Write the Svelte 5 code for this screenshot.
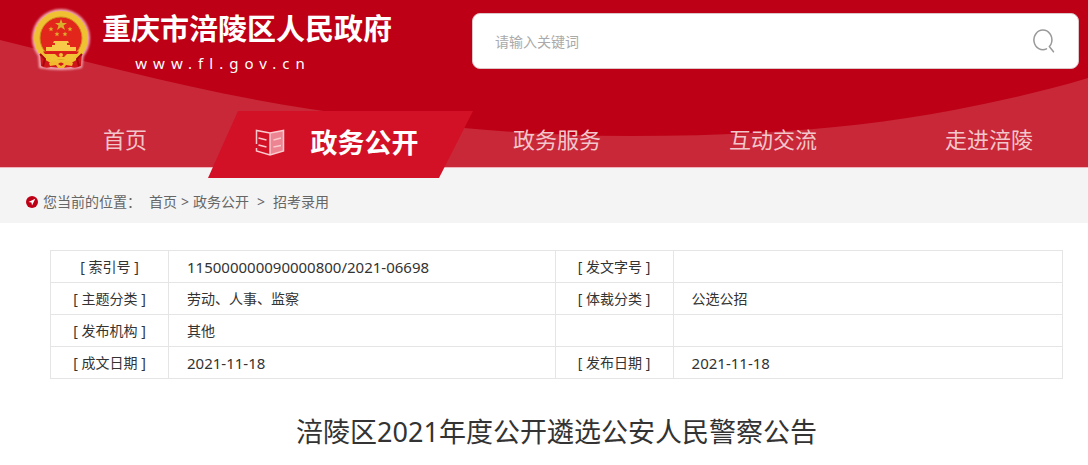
<script>
  const nav = ['首页', '政务公开', '政务服务', '互动交流', '走进涪陵'];
  const active = '政务公开';
  const rows = [
    ['[ 索引号 ]', '115000000090000800/2021-06698', '[ 发文字号 ]', ''],
    ['[ 主题分类 ]', '劳动、人事、监察', '[ 体裁分类 ]', '公选公招'],
    ['[ 发布机构 ]', '其他', '', ''],
    ['[ 成文日期 ]', '2021-11-18', '[ 发布日期 ]', '2021-11-18']
  ];
  const smallStars = [[20, 20], [39, 20], [26, 25], [34, 25]];
  let keyword = $state('');
</script>

<div class="page">
  <header>
    <svg class="wave" viewBox="0 0 1088 167" preserveAspectRatio="none" aria-hidden="true">
      <path d="M0 40C100 65 205 93 310 109C410 124 520 136 630 136C740 136 850 130 954 110C1000 101 1045 91 1088 78V167H0Z" fill="#c82838" />
    </svg>
    <div class="top">
      <a class="brand" href="#home">
        <svg class="emblem" viewBox="0 0 60 64" width="60" height="64" aria-hidden="true">
          <g class="halo">
            <circle cx="30" cy="29" r="29" />
            <path d="M7 44L8 59Q30 63 51 59L53 44Z" />
          </g>
          <path d="M9 43H51L50 57Q44 60 40 58L30 59L20 58Q14 60 10 57Z" fill="#d0151b" />
          <circle cx="30" cy="29" r="24" fill="#e2261c" stroke="#efc032" stroke-width="6" />
          <circle cx="30" cy="29" r="21" fill="none" stroke="#cf8d1c" stroke-width="1" />
          <path d="M9 45L14 50L12 57M51 45L46 50L48 57" fill="none" stroke="#a9060e" stroke-width="2" />
          <path d="M30 10L31.500 14H36L32.500 16.500L34 21L30 18.300L26 21L27.500 16.500L24 14H28.500Z" fill="#d8b02c" />
          {#each smallStars as [x, y]}
            <path transform="translate({x} {y})" d="M0-2.500L.7-.7H2.500L1.100.5L1.600 2.300L0 1.200L-1.600 2.300L-1.100.5L-2.500-.7H-.7Z" fill="#dcae2c" />
          {/each}
          <path d="M23 32H37L38 34H36V36H39V38H45V42H15V38H21V36H24V34H22Z" fill="#f8c948" />
          <path d="M12 42.500H48L46 45H14Z" fill="#d91c1a" />
          <path d="M14 45H24L27 48H33L36 45H46Q42 50 37 52L33 50H27L23 52Q17 50 14 45Z" fill="#f2c136" />
          <circle cx="30" cy="46" r="2" fill="#f2c136" />
          <path d="M18 54Q22 51 26 53Q30 50 34 53Q38 51 42 54L41 57L35 56L33 59H27L25 56L19 57Z" fill="#f2b92f" />
          <path d="M27 55Q30 52 33 55L30 57Z" fill="#d0151b" />
        </svg>
        <span class="names">
          <strong>重庆市涪陵区人民政府</strong>
          <span class="domain">www.fl.gov.cn</span>
        </span>
      </a>
      <form class="search" onsubmit={(e) => e.preventDefault()}>
        <input type="text" placeholder="请输入关键词" aria-label="请输入关键词" bind:value={keyword} />
        <button type="submit" aria-label="搜索">
          <svg viewBox="0 0 24 24" width="24" height="24" fill="none" stroke="#999" stroke-width="1.500" aria-hidden="true">
            <path d="M14.500 19.900A9 9.800 0 1 1 19.700 13Q19.300 15.800 17.300 17.500L21.500 22.800" stroke-linecap="round" stroke-linejoin="round" />
          </svg>
        </button>
      </form>
    </div>
    <nav>
      {#each nav as item}
        <a href="#{item}" class:active={item === active}>
          {#if item === active}
            <svg viewBox="0 0 30 28" width="30" height="28" fill="none" stroke="#f9c9cd" stroke-width="1.500" aria-hidden="true">
              <path d="M15 4L28.500 1.500V22L15 26Z" fill="#ec8491" stroke="none" />
              <path d="M1.500 15V1.500L15 4L28.500 1.500V22L15 26L1.500 22V19M15 4V26M3.500 9L11.500 11M3.500 16L11.500 18M18.500 11L26 9M18.500 18L26 16.500" />
            </svg>
          {/if}
          <span>{item}</span>
        </a>
      {/each}
    </nav>
  </header>

  <div class="crumbs">
    <svg viewBox="0 0 12 12" width="12" height="12" aria-hidden="true">
      <circle cx="6" cy="6" r="6" fill="#bd0016" />
      <path d="M9.300 2.700L2.500 6L5.500 6.500L6 9.500Z" fill="#fff" />
    </svg>
    <span class="here">您当前的位置：</span>
    <a href="#home">首页</a>
    <span class="sep">&gt;</span>
    <a href="#open">政务公开</a>
    <span class="sep wide">&gt;</span>
    <a href="#jobs">招考录用</a>
  </div>

  <main>
    <table>
      <colgroup>
        <col class="label" /><col class="value" /><col class="label" /><col />
      </colgroup>
      <tbody>
        {#each rows as row}
          <tr>
            <th scope="row">{row[0]}</th>
            <td class:number={/^\d/.test(row[1])}>{row[1]}</td>
            <th scope="row">{row[2]}</th>
            <td class:number={/^\d/.test(row[3])}>{row[3]}</td>
          </tr>
        {/each}
      </tbody>
    </table>
    <h1>涪陵区2021年度公开遴选公安人民警察公告</h1>
  </main>
</div>

<style>
  :global(body) {
    margin: 0;
    background: #fff;
  }
  .page {
    font-family: 'Noto Sans', 'Noto Sans CJK SC', sans-serif;
    font-size: 14px;
    color: #333;
    overflow-x: clip;
  }
  a {
    color: inherit;
    text-decoration: none;
  }
  header {
    position: relative;
    background: #bd0016;
    border-bottom: 1px solid #f0b4ba;
  }
  .wave {
    position: absolute;
    inset: 0;
    width: 100%;
    height: 100%;
  }
  .top {
    position: relative;
    display: flex;
    align-items: flex-start;
    justify-content: space-between;
    gap: 79px;
    height: 111px;
    padding: 0 9px 0 31px;
    box-sizing: border-box;
  }
  .brand {
    display: flex;
    gap: 11px;
    padding-top: 9px;
    color: #fff;
  }
  .emblem {
    overflow: visible;
  }
  .halo {
    fill: #f0a6b0;
    filter: blur(1px);
  }
  .names {
    display: flex;
    flex-direction: column;
    align-items: center;
  }
  .names strong {
    font-size: 29px;
    line-height: 40px;
    white-space: nowrap;
  }
  .domain {
    padding-right: 48px;
    font-size: 15px;
    line-height: 28px;
    letter-spacing: 6px;
  }
  .search {
    display: flex;
    flex: 0 1 605px;
    margin-top: 13px;
    height: 54px;
    border: 1px solid #ddc5c8;
    border-radius: 8px;
    background: #fff;
  }
  .search input {
    flex: 1;
    min-width: 0;
    padding: 0 0 0 22px;
    border: 0;
    outline: 0;
    background: transparent;
    font: inherit;
    color: #333;
  }
  .search input::placeholder {
    color: #aaa;
  }
  .search button {
    display: flex;
    align-items: center;
    padding: 0 22px;
    border: 0;
    background: transparent;
    cursor: pointer;
  }
  nav {
    position: relative;
    display: grid;
    grid-template-columns: repeat(5, 1fr);
    height: 56px;
    margin: 0 -9px 0 17px;
  }
  nav a {
    display: flex;
    align-items: center;
    justify-content: center;
    padding-bottom: 12px;
    font-size: 22px;
    line-height: 44px;
    color: #f3c6cb;
    white-space: nowrap;
  }
  nav .active {
    z-index: 1;
    gap: 26px;
    height: 67px;
    margin: 0 -24px 0 -25px;
    padding: 0 8px 3px 0;
    box-sizing: border-box;
    background: #d21126;
    clip-path: polygon(30px 0, 100% 0, calc(100% - 34px) 100%, 0 100%);
    font-size: 27px;
    font-weight: 700;
    color: #fff;
  }
  .crumbs {
    display: flex;
    align-items: center;
    height: 55px;
    padding: 12px 26px 0;
    box-sizing: border-box;
    background: #f4f4f4;
    color: #666;
    line-height: 20px;
  }
  .here {
    margin: 0 8px 0 5px;
  }
  .sep {
    margin: 0 4px;
  }
  .wide {
    margin: 0 8px;
  }
  main {
    padding: 27px 25px 16px 50px;
  }
  table {
    width: 100%;
    table-layout: fixed;
    border-collapse: collapse;
  }
  .label {
    width: 118px;
  }
  .value {
    width: 38.2%;
  }
  th,
  td {
    height: 31px;
    padding: 0;
    border: 1px solid #e5e5e5;
    font-weight: 400;
    line-height: 20px;
  }
  td {
    padding-left: 18px;
  }
  .number {
    font-size: 15px;
  }
  h1 {
    margin: 33px 0 0;
    font-size: 27px;
    font-weight: 400;
    line-height: 40px;
    text-align: center;
  }
</style>
